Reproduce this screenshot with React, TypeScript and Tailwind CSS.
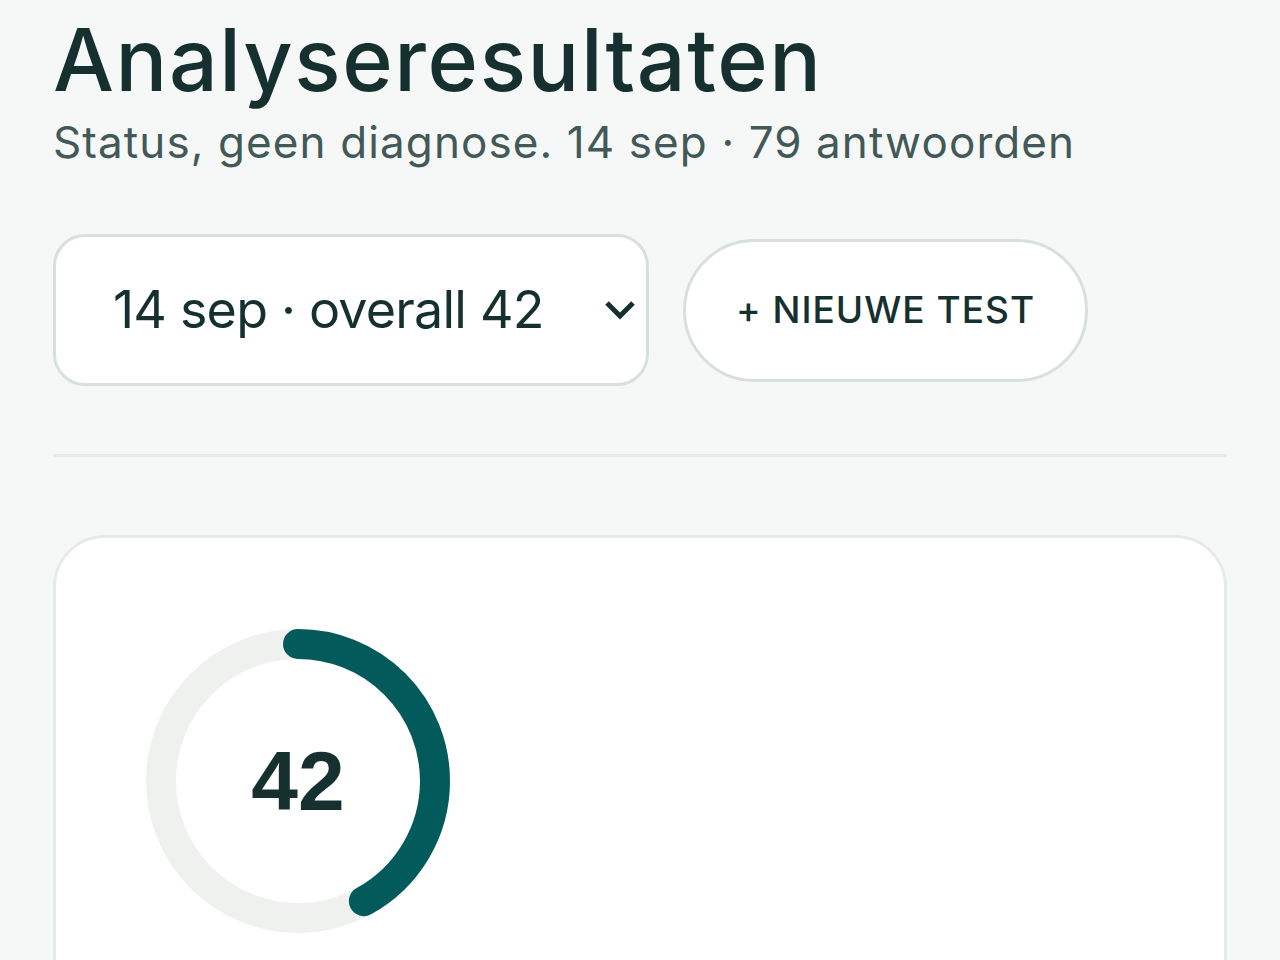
import React from 'react';

const FONT = { fontFamily: 'Inter, "Noto Sans", sans-serif' };

function ScoreRing({ value }: { value: number }) {
    const r = 137;
    const c = 2 * Math.PI * r;
    return (
        <div className="relative w-[310px] h-[310px]">
            <svg width="310" height="310" viewBox="0 0 310 310" className="-rotate-90">
                <circle cx="155" cy="155" r={r} fill="none" stroke="#eff1ef" strokeWidth="30" />
                <circle
                    cx="155"
                    cy="155"
                    r={r}
                    fill="none"
                    stroke="#035a5a"
                    strokeWidth="30"
                    strokeLinecap="round"
                    strokeDasharray={`${(c * value) / 100} ${c}`}
                />
            </svg>
            <div
                className="absolute inset-0 flex items-center justify-center text-[84px] font-bold text-[#163030]"
                style={{ fontFamily: '"Liberation Sans", Arial, sans-serif' }}
            >
                {value}
            </div>
        </div>
    );
}

export default function App() {
    return (
        <div className="min-h-screen bg-[#f5f8f7] px-[53px] overflow-hidden" style={FONT}>
            {/* Header */}
            <h1 className="pt-[14px] text-[86px] leading-[92px] font-medium tracking-[1.6px] text-[#163030]">
                Analyseresultaten
            </h1>
            <p className="mt-[10px] text-[44px] leading-[52px] tracking-[1.1px] text-[#435957]">
                Status, geen diagnose. 14 sep · 79 antwoorden
            </p>

            {/* Controls */}
            <div className="mt-[66px] flex items-center gap-[34px]">
                <div className="w-[596px] h-[152px] rounded-[32px] border-[3px] border-[#d8e0de] bg-white flex items-center justify-between pl-[57px] pr-[10px]">
                    <span className="text-[52px] tracking-[-0.8px] text-[#163030]">14 sep · overall 42</span>
                    <svg width="32" height="22" viewBox="0 0 32 22" fill="none">
                        <path d="M3 4l13 13L29 4" stroke="#163030" strokeWidth="5" />
                    </svg>
                </div>
                <button className="w-[405px] h-[143px] rounded-full border-[3px] border-[#d8e0de] bg-white text-[37px] font-medium tracking-[1px] text-[#163030]">
                    + NIEUWE TEST
                </button>
            </div>

            <div className="mt-[68px] h-[3px] bg-[#e6ebea]" />

            {/* Result card */}
            <div className="mt-[78px] h-[600px] rounded-[52px] border-[3px] border-[#e6ebea] bg-white pt-[88px] pl-[87px]">
                <ScoreRing value={42} />
            </div>
        </div>
    );
}
